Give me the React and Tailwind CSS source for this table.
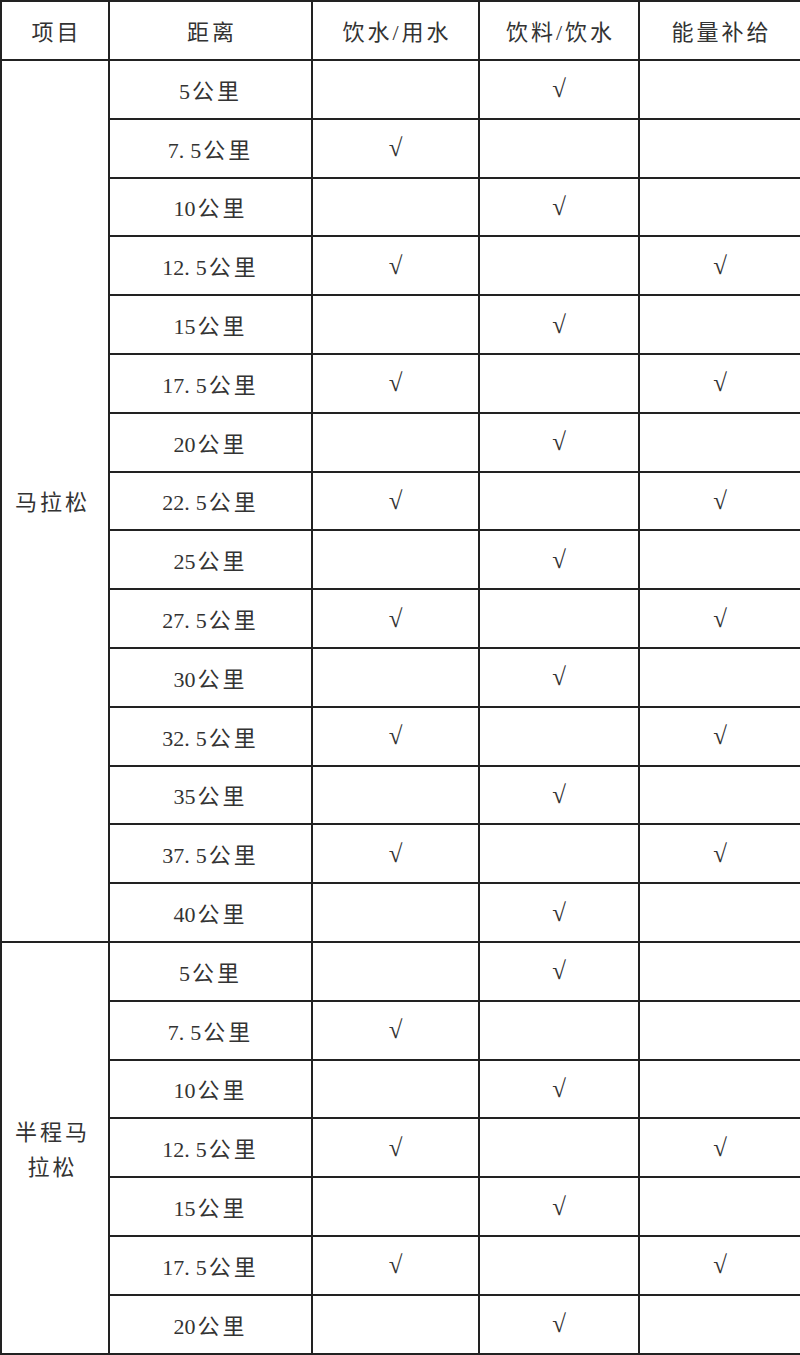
import React from "react";

const marathon = [
  ["5", 0, 1, 0],
  ["7.5", 1, 0, 0],
  ["10", 0, 1, 0],
  ["12.5", 1, 0, 1],
  ["15", 0, 1, 0],
  ["17.5", 1, 0, 1],
  ["20", 0, 1, 0],
  ["22.5", 1, 0, 1],
  ["25", 0, 1, 0],
  ["27.5", 1, 0, 1],
  ["30", 0, 1, 0],
  ["32.5", 1, 0, 1],
  ["35", 0, 1, 0],
  ["37.5", 1, 0, 1],
  ["40", 0, 1, 0],
];

const half = [
  ["5", 0, 1, 0],
  ["7.5", 1, 0, 0],
  ["10", 0, 1, 0],
  ["12.5", 1, 0, 1],
  ["15", 0, 1, 0],
  ["17.5", 1, 0, 1],
  ["20", 0, 1, 0],
];

const cell = "border-2 border-[#222] text-center align-middle";
const txt = "tracking-[3px] pl-[3px]";

function Check({ on }) {
  return (
    <td className={cell}>
      {on ? <span className="inline-block pt-1 text-[25px] leading-none">√</span> : null}
    </td>
  );
}

function Distance({ value }) {
  const [a, b] = value.split(".");
  return (
    <span className="inline-block pt-1 text-[22px]">
      {a}
      {b && <span className="mr-[6px]">.</span>}
      {b}
      <span className="ml-[2px] tracking-[3px]">公里</span>
    </span>
  );
}

function Rows({ label, data }) {
  return data.map((r, i) => (
    <tr key={i} className="h-[58.8px]">
      {i === 0 && (
        <td rowSpan={data.length} className={cell}>
          <div className={`${txt} leading-[35px] px-2 pt-1`}>{label}</div>
        </td>
      )}
      <td className={cell}>
        <Distance value={r[0]} />
      </td>
      <Check on={r[1]} />
      <Check on={r[2]} />
      <Check on={r[3]} />
    </tr>
  ));
}

export default function App() {
  const heads = ["项目", "距离", "饮水/用水", "饮料/饮水", "能量补给"];
  return (
    <div
      className="w-[800px] bg-white text-[#333] text-[22px]"
      style={{ fontFamily: '"Liberation Serif", "Noto Sans CJK SC", serif' }}
    >
      <table className="w-[800px] border-collapse table-fixed">
        <colgroup>
          <col className="w-[108px]" />
          <col className="w-[203px]" />
          <col className="w-[167px]" />
          <col className="w-[160px]" />
          <col className="w-[162px]" />
        </colgroup>
        <tbody>
          <tr className="h-[59px]">
            {heads.map((h) => (
              <td key={h} className={cell}>
                <span className={`${txt} inline-block pt-1`}>{h}</span>
              </td>
            ))}
          </tr>
          <Rows label="马拉松" data={marathon} />
          <Rows label="半程马拉松" data={half} />
        </tbody>
      </table>
    </div>
  );
}
